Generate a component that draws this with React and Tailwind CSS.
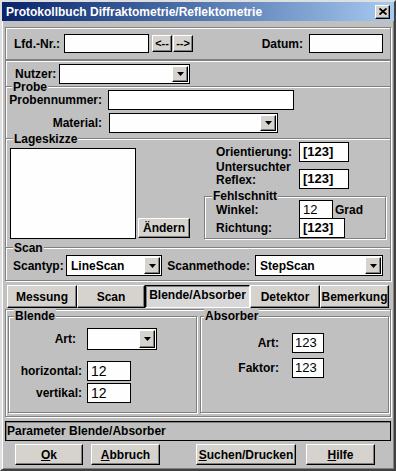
import React from "react";

const etched = "border border-[#808080] shadow-[inset_1px_1px_0_#fff,1px_1px_0_#fff]";
const raised =
  "bg-[#d6d3ce] border border-t-white border-l-white border-r-black border-b-black shadow-[inset_-1px_-1px_0_#808080]";
const field = "border border-black bg-[#fdfefd]";

const Arrow = () => (
  <svg width="7" height="4" viewBox="0 0 7 4">
    <polygon points="0,0 7,0 3.5,4" fill="#000" />
  </svg>
);

const Combo = ({ className, value }) => (
  <div className={`flex border border-black bg-[#fdfefd] p-[1px] ${className}`}>
    <span className="flex-1 self-center pl-[3px] leading-none">{value}</span>
    <span className={`flex w-[16px] items-center justify-center ${raised}`}>
      <Arrow />
    </span>
  </div>
);

// horizontal separator with caption sitting on the line
const Heading = ({ label, pl }) => (
  <div className={`flex h-[2px] items-center border-t border-b border-t-[#808080] border-b-white ${pl}`}>
    <span className="bg-[#c0c0c0] px-[1px] leading-[14px]">{label}</span>
  </div>
);

// caption on the top edge of a group box
const GroupLabel = ({ label, pl }) => (
  <div className={`-mt-[2px] flex h-[2px] items-center ${pl}`}>
    <span className="bg-[#c0c0c0] px-[1px] leading-[14px]">{label}</span>
  </div>
);

const Btn = ({ className, children }) => (
  <button className={`flex items-center justify-center leading-none ${raised} ${className}`}>{children}</button>
);

export default function App() {
  const tabs = [
    { label: "Messung", w: "w-[70px]" },
    { label: "Scan", w: "w-[68px]" },
    { label: "Blende/Absorber", w: "w-[105px]", active: true },
    { label: "Detektor", w: "w-[70px]" },
    { label: "Bemerkung", w: "w-[69px]" },
  ];

  return (
    <div className="flex h-[471px] w-[396px] flex-col border-2 border-t-[#dfdfdf] border-l-[#dfdfdf] border-r-[#404040] border-b-[#404040] bg-[#c0c0c0] font-['Liberation_Sans',Arial,sans-serif] text-[12px] font-bold text-black shadow-[inset_1px_1px_0_#fff,inset_-1px_-1px_0_#808080]">
      {/* title bar */}
      <div className="flex h-[19px] shrink-0 items-center bg-gradient-to-r from-[#0a246a] to-[#a6caf0] pl-[4px] pr-[4px]">
        <span className="text-[12px] text-white">Protokollbuch Diffraktometrie/Reflektometrie</span>
        <span className={`ml-auto flex h-[14px] w-[15px] items-center justify-center ${raised}`}>
          <svg width="8" height="7" viewBox="0 0 8 7">
            <path d="M0.5 0.5 L7.5 6.5 M7.5 0.5 L0.5 6.5" stroke="#000" strokeWidth="1.8" />
          </svg>
        </span>
      </div>

      <div className="flex flex-col px-[3px]">
        {/* Lfd / Datum */}
        <div className={`mt-[6px] flex h-[33px] items-center pl-[8px] pr-[7px] ${etched}`}>
          <span className="w-[50px]">Lfd.-Nr.:</span>
          <div className={`h-[19px] w-[85px] ${field}`} />
          <Btn className="ml-[3px] h-[17px] w-[20px] text-[11px]">&lt;--</Btn>
          <Btn className="ml-[1px] h-[17px] w-[20px] text-[11px]">--&gt;</Btn>
          <span className="ml-auto">Datum:</span>
          <div className={`ml-[6px] h-[19px] w-[74px] ${field}`} />
        </div>

        {/* main frame */}
        <div className={`flex flex-col pb-[4px] ${etched}`}>
          <div className="mt-[3px] flex h-[20px] items-center pl-[9px]">
            <span className="w-[44px]">Nutzer:</span>
            <Combo className="h-[20px] w-[131px]" value="" />
          </div>

          <div className="mt-[2px]">
            <Heading label="Probe" pl="pl-[6px]" />
          </div>
          <div className="mt-[2px] flex h-[20px] items-center">
            <span className="w-[96px] text-right">Probennummer:</span>
            <div className={`ml-[6px] h-[20px] w-[186px] ${field}`} />
          </div>
          <div className="mt-[3px] flex h-[20px] items-center">
            <span className="w-[96px] text-right">Material:</span>
            <Combo className="ml-[7px] h-[20px] w-[169px]" value="" />
          </div>

          <div className="mt-[5px]">
            <Heading label="Lageskizze" pl="pl-[7px]" />
          </div>
          <div className="flex">
            <div className="ml-[4px] mt-[8px] flex items-end">
              <div className={`h-[91px] w-[126px] ${field}`} />
              <Btn className="mb-[1px] ml-[2px] h-[20px] w-[52px]">Ändern</Btn>
            </div>
            <div className="ml-[14px] flex w-[182px] flex-col">
              <div className="mt-[2px] flex h-[20px] items-center pl-[12px]">
                <span className="w-[83px]">Orientierung:</span>
                <div className={`flex h-[20px] w-[50px] items-center pl-[3px] text-[13px] ${field}`}>[123]</div>
              </div>
              <div className="-mt-[1px] flex items-end pl-[12px]">
                <span className="w-[83px] pb-[2px] leading-[13px]">
                  Untersuchter
                  <br />
                  Reflex:
                </span>
                <div className={`flex h-[20px] w-[50px] items-center pl-[3px] text-[13px] ${field}`}>[123]</div>
              </div>
              <div className={`mt-[7px] flex flex-col ${etched}`}>
                <GroupLabel label="Fehlschnitt" pl="pl-[7px]" />
                <div className="mt-[3px] flex h-[19px] items-center pl-[11px]">
                  <span className="w-[83px]">Winkel:</span>
                  <div className={`flex h-[19px] w-[34px] items-center pl-[3px] text-[13px] font-normal ${field}`}>12</div>
                  <span className="ml-[2px]">Grad</span>
                </div>
                <div className="-mt-[1px] flex h-[20px] items-center pl-[11px]">
                  <span className="w-[83px]">Richtung:</span>
                  <div className={`flex h-[20px] w-[46px] items-center pl-[3px] text-[13px] ${field}`}>[123]</div>
                </div>
              </div>
            </div>
          </div>

          <div className="mt-[8px]">
            <Heading label="Scan" pl="pl-[7px]" />
          </div>
          <div className="mt-[6px] flex h-[21px] items-center pl-[7px]">
            <span className="w-[53px]">Scantyp:</span>
            <Combo className="h-[21px] w-[96px]" value="LineScan" />
            <span className="w-[93px] pr-[5px] text-right">Scanmethode:</span>
            <Combo className="h-[21px] w-[128px]" value="StepScan" />
          </div>
        </div>

        {/* tabs */}
        <div className="mt-[4px] flex h-[23px] pl-[2px]">
          {tabs.map((t) =>
            t.active ? (
              <div
                key={t.label}
                className={`flex h-[23px] justify-center border border-t-black border-l-black border-r-white border-b-white bg-[#d8d8d8] pt-[2px] leading-[14px] shadow-[inset_1px_1px_0_#808080] ${t.w}`}
              >
                {t.label}
              </div>
            ) : (
              <Btn key={t.label} className={`h-[23px] ${t.w}`}>
                {t.label}
              </Btn>
            )
          )}
        </div>

        {/* tab page */}
        <div className={`mt-[1px] flex gap-[3px] pb-[3px] ${etched}`}>
          <div className={`ml-[2px] mt-[6px] flex h-[97px] w-[189px] flex-col ${etched}`}>
            <GroupLabel label="Blende" pl="pl-[5px]" />
            <div className="mt-[11px] flex h-[22px] items-center">
              <span className="w-[73px] pr-[6px] text-right">Art:</span>
              <Combo className="ml-[5px] h-[22px] w-[70px]" value="" />
            </div>
            <div className="mt-[11px] flex h-[20px] items-center">
              <span className="w-[73px] text-right">horizontal:</span>
              <div className={`ml-[5px] flex h-[20px] w-[44px] items-center pl-[3px] text-[14px] font-normal ${field}`}>12</div>
            </div>
            <div className="mt-[2px] flex h-[20px] items-center">
              <span className="w-[73px] text-right">vertikal:</span>
              <div className={`ml-[5px] flex h-[20px] w-[44px] items-center pl-[3px] text-[14px] font-normal ${field}`}>12</div>
            </div>
          </div>
          <div className={`mt-[6px] flex h-[97px] w-[189px] flex-col ${etched}`}>
            <GroupLabel label="Absorber" pl="pl-[3px]" />
            <div className="mt-[16px] flex h-[20px] items-center">
              <span className="w-[79px] pr-[1px] text-right">Art:</span>
              <div className={`ml-[12px] flex h-[20px] w-[32px] items-center pl-[2px] text-[13px] font-normal ${field}`}>123</div>
            </div>
            <div className="mt-[5px] flex h-[20px] items-center">
              <span className="w-[79px] pr-[1px] text-right">Faktor:</span>
              <div className={`ml-[12px] flex h-[20px] w-[32px] items-center pl-[2px] text-[13px] font-normal ${field}`}>123</div>
            </div>
          </div>
        </div>

        {/* status bar */}
        <div className="mt-[4px] flex h-[20px] items-center border border-black pl-[1px] shadow-[inset_1px_1px_0_#808080]">
          Parameter Blende/Absorber
        </div>

        {/* buttons */}
        <div className="mt-[3px] flex h-[21px]">
          <Btn className="ml-[10px] h-[21px] w-[68px]">
            <u>O</u>k
          </Btn>
          <Btn className="ml-[8px] h-[21px] w-[69px]">
            <u>A</u>bbruch
          </Btn>
          <Btn className="ml-[36px] h-[21px] w-[100px]">
            <u>S</u>uchen/Drucken
          </Btn>
          <Btn className="ml-[10px] h-[21px] w-[69px]">
            <u>H</u>ilfe
          </Btn>
        </div>
      </div>
    </div>
  );
}
